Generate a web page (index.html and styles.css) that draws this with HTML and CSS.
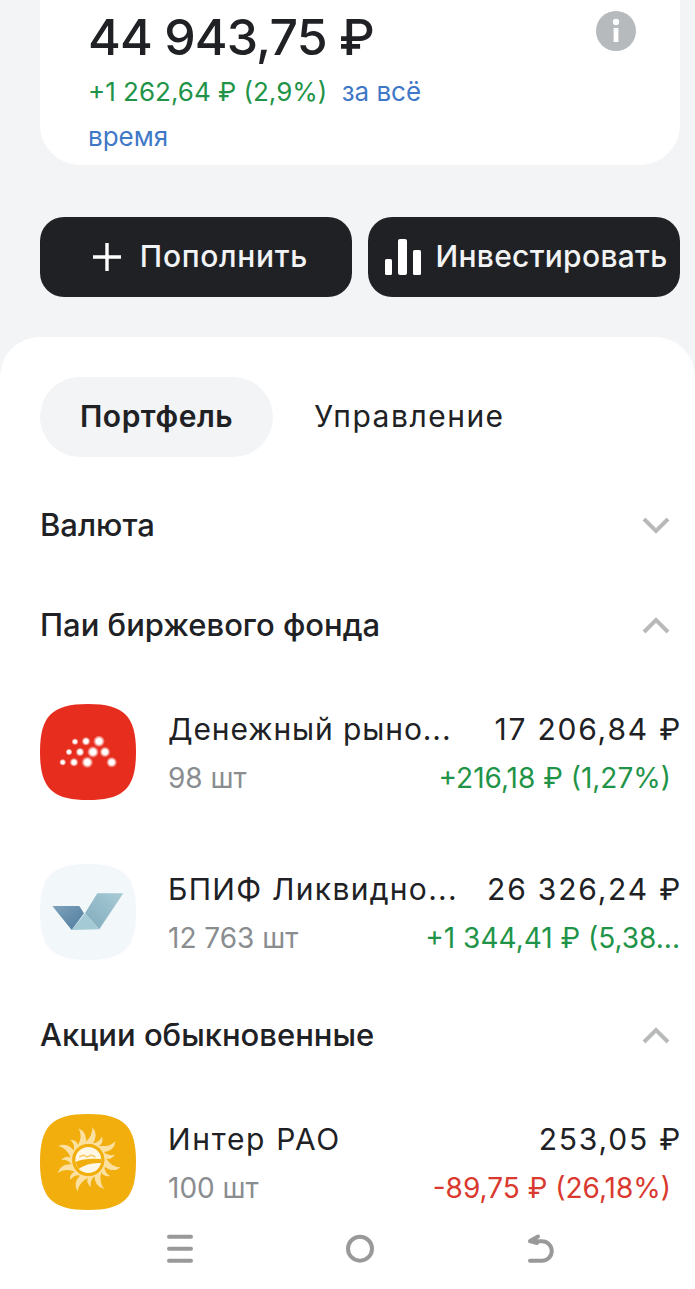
FILE: index.html
```html
<!DOCTYPE html>
<html lang="ru">
<head>
<meta charset="utf-8">
<title>Портфель</title>
<link rel="stylesheet" href="styles.css">
</head>
<body>
<div class="page">
  <header class="summary">
    <div class="summary-text">
      <div class="total">44 943,75 ₽</div>
      <p class="change"><span class="pos">+1 262,64 ₽ (2,9%)</span> <span class="period period-first">за всё</span> <span class="period">время</span></p>
    </div>
    <svg class="info" viewBox="0 0 40 40"><circle cx="20" cy="20" r="20" fill="#b6babd"/><circle cx="20" cy="11" r="3.2" fill="#fff"/><rect x="17.6" y="17" width="4.8" height="14" fill="#fff"/></svg>
  </header>

  <div class="actions">
    <button class="action action-add">
      <svg class="ic-plus" viewBox="0 0 30 30"><path d="M15 1v28M1 15h28" stroke="#fff" stroke-width="3.4" fill="none"/></svg>
      Пополнить
    </button>
    <button class="action action-invest">
      <svg class="ic-bars" viewBox="0 0 36 36"><rect x="0" y="20" width="7" height="16" rx="1.5" fill="#fff"/><rect x="13" y="0" width="9" height="36" rx="2" fill="#fff"/><rect x="28" y="11" width="8" height="25" rx="1.5" fill="#fff"/></svg>
      Инвестировать
    </button>
  </div>

  <main class="sheet">
    <nav class="tabs">
      <div class="tab tab-active">Портфель</div>
      <div class="tab">Управление</div>
    </nav>

    <div class="section-head first">
      <span>Валюта</span>
      <svg class="chev" viewBox="0 0 28 18"><path d="M2 3l12 12L26 3" fill="none" stroke="#b8b9ba" stroke-width="4"/></svg>
    </div>

    <div class="section-head">
      <span>Паи биржевого фонда</span>
      <svg class="chev" viewBox="0 0 28 18"><path d="M2 16L14 4l12 12" fill="none" stroke="#b8b9ba" stroke-width="4"/></svg>
    </div>
    <div class="rows">
      <div class="row">
        <svg class="logo" viewBox="0 0 96 96">
          <defs><radialGradient id="glow"><stop offset="0.45" stop-color="#fff"/><stop offset="1" stop-color="#fff" stop-opacity="0"/></radialGradient></defs>
          <path class="sq" fill="#e72d1e" d="M48 0C84 0 96 12 96 48S84 96 48 96 0 84 0 48 12 0 48 0Z"/>
          <g fill="url(#glow)">
            <circle cx="35" cy="37.7" r="3.5"/><circle cx="46" cy="37.3" r="4.5"/><circle cx="59" cy="37.3" r="6"/>
            <circle cx="29" cy="48" r="3.5"/><circle cx="40" cy="48" r="4.5"/><circle cx="53" cy="48" r="6"/><circle cx="65" cy="48" r="5.5"/>
            <circle cx="22.7" cy="58.3" r="3.5"/><circle cx="34" cy="58.3" r="4.5"/><circle cx="47.3" cy="58.3" r="6"/><circle cx="71.7" cy="58.3" r="5.5"/>
          </g>
        </svg>
        <div class="row-body">
          <div class="line"><span class="name">Денежный рыно...</span><span class="value">17 206,84 ₽</span></div>
          <div class="line sub"><span class="qty">98 шт</span><span class="pos inset">+216,18 ₽ (1,27%)</span></div>
        </div>
      </div>
      <div class="row">
        <svg class="logo" viewBox="0 0 96 96">
          <defs>
            <linearGradient id="bl" x1="0" y1="0" x2="1" y2="1"><stop offset="0" stop-color="#7ea3bb"/><stop offset="1" stop-color="#4f7b9e"/></linearGradient>
            <linearGradient id="br" x1="1" y1="0" x2="0" y2="1"><stop offset="0" stop-color="#a9cbd6"/><stop offset="1" stop-color="#7fabbc"/></linearGradient>
          </defs>
          <path class="sq" fill="#f2f7fa" d="M48 0C84 0 96 12 96 48S84 96 48 96 0 84 0 48 12 0 48 0Z"/>
          <path fill="url(#bl)" d="M12.3 42h27l4.7 7.3L31.7 66Z"/>
          <path fill="url(#br)" d="M57.3 29.3h26L59.3 65.3 45 49.3Z"/>
          <path fill="#a4cbd5" d="M31.7 66 45 49.3l14.3 16Z"/>
        </svg>
        <div class="row-body">
          <div class="line"><span class="name name-mid">БПИФ Ликвидно...</span><span class="value">26 326,24 ₽</span></div>
          <div class="line sub"><span class="qty">12 763 шт</span><span class="pos">+1 344,41 ₽ (5,38...</span></div>
        </div>
      </div>
    </div>

    <div class="section-head shares">
      <span>Акции обыкновенные</span>
      <svg class="chev" viewBox="0 0 28 18"><path d="M2 16L14 4l12 12" fill="none" stroke="#b8b9ba" stroke-width="4"/></svg>
    </div>
    <div class="rows">
      <div class="row">
        <svg class="logo" viewBox="0 0 96 96">
          <defs><filter id="soft"><feGaussianBlur stdDeviation="0.6"/></filter></defs>
          <path class="sq" fill="#f1ae0c" d="M48 0C84 0 96 12 96 48S84 96 48 96 0 84 0 48 12 0 48 0Z"/>
          <g transform="translate(48.3 46)" fill="#fbe0a0" filter="url(#soft)">
            <path id="ray" d="M-4-17Q5-24 4-33Q11-25 4-16Z"/>
            <path id="ray2" transform="rotate(24)" d="M-3-17Q3-20 3-27Q8-21 3-16Z"/>
            <use href="#ray" transform="rotate(48)"/><use href="#ray2" transform="rotate(48)"/>
            <use href="#ray" transform="rotate(96)"/><use href="#ray2" transform="rotate(96)"/>
            <use href="#ray" transform="rotate(144)"/><use href="#ray2" transform="rotate(144)"/>
            <use href="#ray" transform="rotate(192)"/><use href="#ray2" transform="rotate(192)"/>
            <use href="#ray" transform="rotate(240)"/><use href="#ray2" transform="rotate(240)"/>
            <use href="#ray" transform="rotate(288)"/><use href="#ray2" transform="rotate(288)"/>
            <use href="#ray" transform="rotate(336)"/><use href="#ray2" transform="rotate(336)"/>
            <circle r="17" fill="none" stroke="#fbe0a0" stroke-width="1.6"/>
            <circle r="13" fill="#fff8e6"/>
            <path d="M-13 2Q-4-2 13-1V3Q0 2-10 9Z" fill="#f1ae0c"/>
            <path d="M-9-3l4-2 4 2 4-2 4 2" fill="none" stroke="#f6cb66" stroke-width="1.5"/>
          </g>
        </svg>
        <div class="row-body">
          <div class="line"><span class="name name-wide">Интер РАО</span><span class="value">253,05 ₽</span></div>
          <div class="line sub"><span class="qty">100 шт</span><span class="neg inset">-89,75 ₽ (26,18%)</span></div>
        </div>
      </div>
    </div>

    <footer class="sysnav">
      <svg class="sys" viewBox="0 0 30 30"><path d="M4 3.7h22M4 15.7h22M4 27.7h22" fill="none" stroke="#999" stroke-width="4" stroke-linecap="round"/></svg>
      <svg class="sys" viewBox="0 0 30 30"><circle cx="15" cy="15.7" r="12" fill="none" stroke="#999" stroke-width="4"/></svg>
      <svg class="sys" viewBox="0 0 30 30"><path d="M5 27.7h12a9.75 9.75 0 0 0 0-19.5H5M13 3.5 5 8l7 2" fill="none" stroke="#999" stroke-width="4" stroke-linecap="round" stroke-linejoin="round"/></svg>
    </footer>
  </main>
</div>
</body>
</html>
```
FILE: styles.css
```css
* { box-sizing: border-box; }
html, body { margin: 0; padding: 0; }
body { font-family: Inter, "Noto Sans", sans-serif; color: #202124; background: #f2f4f5; }
.page { width: 695px; height: 1289px; overflow: hidden; display: flex; flex-direction: column; }

.summary { height: 165px; margin: 0 15px 0 40px; padding: 11px 44px 0 48px; background: #fff; border-radius: 0 0 40px 40px; display: flex; justify-content: space-between; align-items: flex-start; }
.summary-text { width: 350px; }
.total { font-size: 50px; font-weight: 450; line-height: 52px; white-space: nowrap; letter-spacing: -0.9px; }
.change { margin: 6px 0 0; font-size: 26px; line-height: 45px; }
.pos { color: #1f9448; }
.neg { color: #d9392e; }
.period { color: #3f78c6; }
.period-first { margin-left: 7px; }
.info { width: 40px; height: 40px; flex: none; }

.actions { margin: 52px 15px 0 40px; display: grid; grid-template-columns: 1fr 1fr; gap: 16px; }
.action { height: 80px; border: 0; border-radius: 24px; background: #202124; color: #f2f3f4; font: 500 30px Inter, "Noto Sans", sans-serif; display: flex; align-items: center; justify-content: center; padding: 0 0 2px; white-space: nowrap; }
.action-add { gap: 18px; letter-spacing: 0.7px; padding-left: 8px; }
.action-invest { gap: 14px; letter-spacing: 0.3px; padding-left: 5px; }
.ic-plus { width: 30px; height: 30px; margin-top: 2px; }
.ic-bars { width: 36px; height: 36px; margin-top: 2px; }

.sheet { flex: 1; margin-top: 40px; padding-top: 40px; background: #fff; border-radius: 40px 40px 0 0; }
.tabs { display: flex; margin-left: 40px; }
.tab { height: 78px; margin-bottom: 2px; padding: 0 41px; border-radius: 40px; font-size: 30px; letter-spacing: 1.5px; display: flex; align-items: center; }
.tab-active { height: 80px; margin-bottom: 0; padding: 0 40px 2px; background: #f2f4f5; font-weight: 600; letter-spacing: 0.5px; }

.section-head { height: 100px; margin: 0 25px 0 40px; padding-bottom: 2px; display: flex; align-items: center; justify-content: space-between; font-size: 31px; font-weight: 500; }
.section-head .chev { margin-top: 2px; }
.section-head.first { margin-top: 18px; }
.section-head.shares { margin-top: 25px; }
.chev { width: 28px; height: 18px; }

.rows { margin-top: 29px; display: flex; flex-direction: column; gap: 64px; }
.row { margin: 0 15px 0 40px; display: flex; gap: 32px; align-items: center; }
.logo { width: 96px; height: 96px; flex: none; }
.row-body { flex: 1; min-width: 0; padding-top: 2px; display: flex; flex-direction: column; gap: 12px; }
.line { display: flex; justify-content: space-between; font-size: 30px; line-height: 38px; white-space: nowrap; }
.name { letter-spacing: 0.9px; }
.name-mid { letter-spacing: 1.3px; }
.name-wide { letter-spacing: 1.7px; }
.value { letter-spacing: 1.8px; margin-right: -2px; }
.sub { font-size: 28px; line-height: 36px; }
.qty { color: #8a8d90; }
.inset { margin-right: 9px; }

.sysnav { height: 79px; padding: 23px 0 0 165px; display: grid; grid-template-columns: repeat(3, 30px); column-gap: 150px; align-items: start; }
.sys { width: 30px; height: 30px; }
```
